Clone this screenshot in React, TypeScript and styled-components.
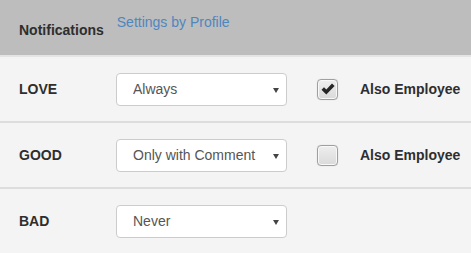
import React from "react";
import styled, { createGlobalStyle } from "styled-components";

const Global = createGlobalStyle`
  html, body { margin: 0; padding: 0; background: #f4f4f4; }
  body { font-family: "Liberation Sans", Arial, sans-serif; font-size: 14px; color: #333; }
`;

const Page = styled.div`
  width: 471px;
  height: 253px;
  overflow: hidden;
  background: #f4f4f4;
`;

const Header = styled.div`
  height: 55px;
  background: #bdbdbd;
  border-bottom: 2px solid #e4e4e4;
  display: flex;
  align-items: flex-start;
  padding-left: 19px;
  box-sizing: content-box;
`;

const Title = styled.div`
  font-weight: bold;
  font-size: 14px;
  color: #2e2e2e;
  margin-top: 22px;
  line-height: 16px;
`;

const ProfileLink = styled.a`
  color: #4f86bf;
  font-size: 14px;
  line-height: 16px;
  margin-top: 14px;
  margin-left: 13px;
  text-decoration: none;
`;

const Row = styled.div`
  display: grid;
  grid-template-columns: 97px 171px 30px 21px 22px auto;
  align-items: center;
  height: 64px;
  padding-left: 19px;
  border-bottom: 2px solid #dddddd;
  &:last-child { border-bottom: none; }
`;

const Label = styled.div`
  font-weight: bold;
  font-size: 14px;
  color: #2e2e2e;
  grid-column: 1;
`;

const SelectWrap = styled.div`
  position: relative;
  grid-column: 2;
  height: 33px;
`;

const Select = styled.select`
  appearance: none;
  -webkit-appearance: none;
  width: 171px;
  height: 33px;
  box-sizing: border-box;
  border: 1px solid #cccccc;
  border-radius: 4px;
  background: #ffffff;
  font-family: "Liberation Sans", Arial, sans-serif;
  font-size: 14px;
  color: #555555;
  padding: 0 0 0 16px;
  outline: none;
`;

const Arrow = styled.svg`
  position: absolute;
  right: 8px;
  top: 15px;
  pointer-events: none;
`;

const Box = styled.span<{ $checked?: boolean }>`
  grid-column: 4;
  width: 21px;
  height: 21px;
  box-sizing: border-box;
  border: 1px solid #9f9f9f;
  border-radius: 4px;
  background: linear-gradient(#eeeeee, #dadada);
  box-shadow: inset 0 0 0 1px #f8f8f8, 0 0 1px rgba(0,0,0,0.2);
  display: flex;
  align-items: center;
  justify-content: center;
`;

const CheckText = styled.span`
  grid-column: 6;
  font-weight: bold;
  font-size: 14px;
  color: #2e2e2e;
  white-space: nowrap;
`;

type RowData = { label: string; value: string; employee?: boolean; checked?: boolean };

const rows: RowData[] = [
  { label: "LOVE", value: "Always", employee: true, checked: true },
  { label: "GOOD", value: "Only with Comment", employee: true, checked: false },
  { label: "BAD", value: "Never" },
];

const options = ["Always", "Only with Comment", "Never"];

export default function App() {
  return (
    <Page>
      <Global />
      <Header>
        <Title>Notifications</Title>
        <ProfileLink href="#">Settings by Profile</ProfileLink>
      </Header>
      {rows.map((r) => (
        <Row key={r.label}>
          <Label>{r.label}</Label>
          <SelectWrap>
            <Select defaultValue={r.value}>
              {options.map((o) => (
                <option key={o}>{o}</option>
              ))}
            </Select>
            <Arrow width="6" height="5" viewBox="0 0 6 5">
              <path d="M0 0 H6 L3 5 Z" fill="#444" />
            </Arrow>
          </SelectWrap>
          {r.employee && (
            <>
              <Box $checked={r.checked}>
                {r.checked && (
                  <svg width="14" height="12" viewBox="0 0 14 12">
                    <path d="M0.5 6.8 L3 4.3 L5.3 6.6 L11 0.6 L13.6 3 L5.3 11.4 Z" fill="#262626" />
                  </svg>
                )}
              </Box>
              <CheckText>Also Employee</CheckText>
            </>
          )}
        </Row>
      ))}
    </Page>
  );
}
